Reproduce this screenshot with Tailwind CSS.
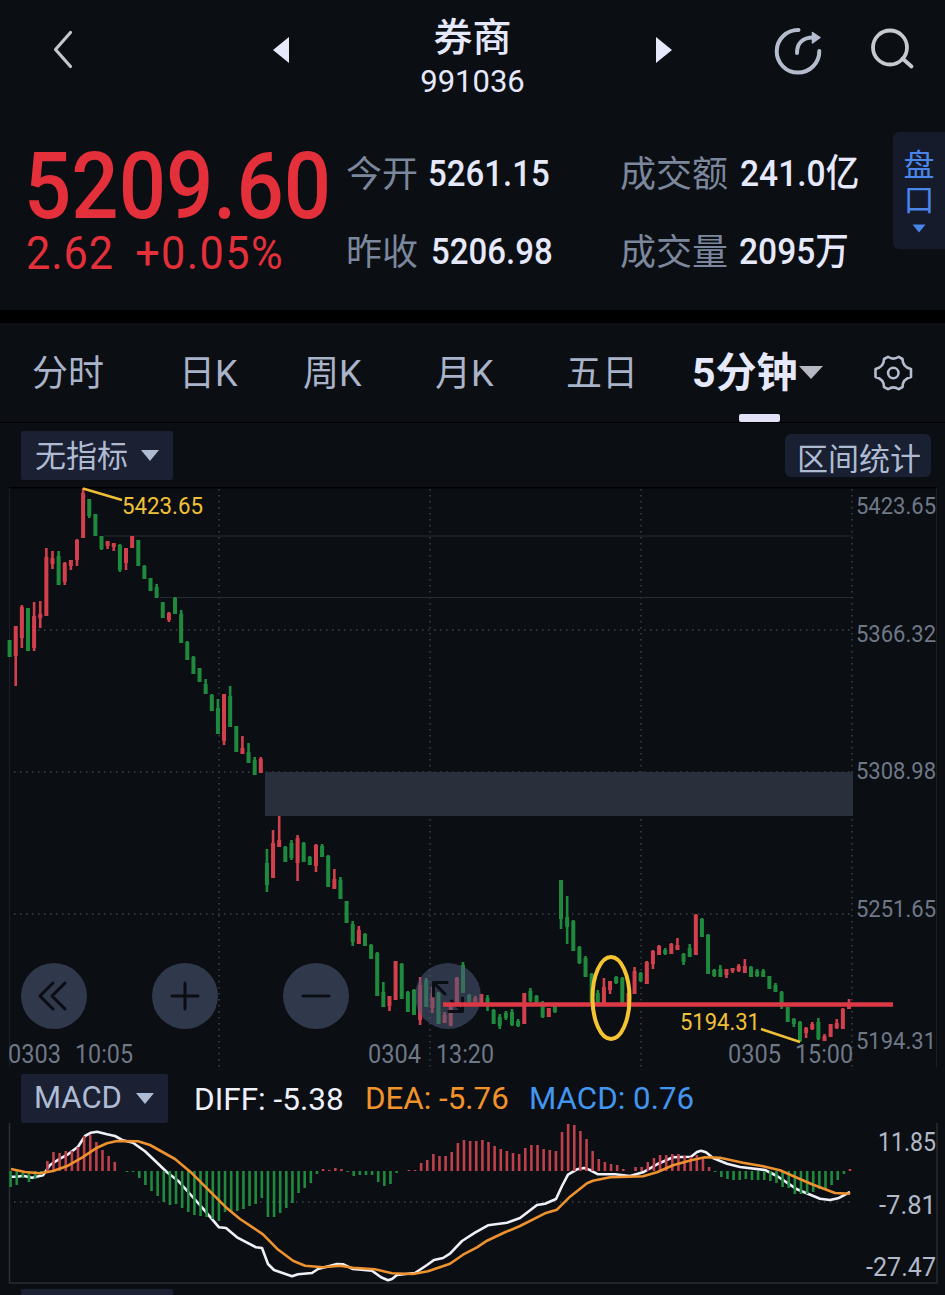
<!DOCTYPE html>
<html lang="zh-CN">
<head>
    <meta charset="UTF-8">
    <meta name="viewport" content="width=device-width, initial-scale=1.0">
    <title>券商 991036</title>
    <script src="https://cdn.jsdelivr.net/npm/@tailwindcss/browser@4"></script>
</head>
<body class="w-[945px] h-[1295px] overflow-hidden bg-[#0b0e13] text-[#e6e9fb] font-['Roboto','Noto_Sans_CJK_SC',sans-serif]">

    <!-- Title bar -->
    <header class="flex items-start h-[131px]">
        <svg class="mt-[28px] ml-[48px] w-8 h-11 shrink-0" viewBox="0 0 32 44" fill="none" stroke="#c3c6cd" stroke-width="3.2" stroke-linecap="round" stroke-linejoin="round"><path d="M22.5 4.5 7.500 21.500 22.500 38.500"/></svg>
        <svg class="mt-[36px] ml-[192px] w-[18px] h-7 shrink-0" viewBox="0 0 18 28" fill="#e6e9fb"><path d="M17 1v26L1 14z"/></svg>
        <div class="w-[365px] flex flex-col items-center">
            <h1 class="mt-[15px] text-[39px] leading-[46px] font-medium">券商</h1>
            <p class="mt-[2px] text-[31px] leading-[38px]">991036</p>
        </div>
        <svg class="mt-[36px] w-[18px] h-7 shrink-0" viewBox="0 0 18 28" fill="#e6e9fb"><path d="M1 1v26l16-13z"/></svg>
        <svg class="mt-[24px] ml-[98px] w-[54px] h-[54px] shrink-0" viewBox="771 24 54 54" fill="none" stroke="#b4bccd" stroke-width="4" stroke-linecap="round">
            <path d="M798.500 30A21.300 21.300 0 1 0 819.300 51"/>
            <path d="M797 53C797 43 803 37.500 813 37.500"/>
            <path d="M812.500 32.500 820 37.500 812.500 43z" fill="#b4bccd" stroke-width="1.500" stroke-linejoin="round"/>
        </svg>
        <svg class="mt-[24px] ml-[43px] w-[50px] h-[50px] shrink-0" viewBox="868 24 50 50" fill="none" stroke="#c6c9d0" stroke-width="3.800" stroke-linecap="round"><circle cx="890" cy="47.500" r="17"/><path d="M902.500 58.500 911.500 66.500"/></svg>
    </header>

    <!-- Quote summary -->
    <section class="flex h-[179px]">
        <div class="ml-[24px] w-[322px] text-[#e3303a] whitespace-nowrap">
            <div class="mt-[10px] h-[92px] text-[92px] leading-[92px] font-medium origin-left scale-x-[.905]">5209.60</div>
            <div class="h-[40px] text-[47px] leading-[40px] origin-left scale-x-[.92] flex gap-[23px] ml-[2px] tracking-[1px]"><span>2.62</span><span class="tracking-[1.500px]">+0.05%</span></div>
        </div>
        <dl class="w-[547px] grid grid-cols-[274px_273px] auto-rows-[78px] mt-[3px] whitespace-nowrap">
            <div class="flex items-center gap-[10px]"><dt class="pt-[4px] text-[36px] text-[#7b879c]">今开</dt><dd class="text-[37.500px] font-medium origin-left scale-x-[.88]">5261.15</dd></div>
            <div class="flex items-center gap-[12px]"><dt class="pt-[4px] text-[36px] text-[#7b879c]">成交额</dt><dd class="text-[37.500px] font-medium origin-left scale-x-[.895]">241.0亿</dd></div>
            <div class="flex items-center gap-[13px]"><dt class="pt-[4px] text-[36px] text-[#7b879c]">昨收</dt><dd class="text-[37.500px] font-medium origin-left scale-x-[.88]">5206.98</dd></div>
            <div class="flex items-center gap-[11px]"><dt class="pt-[4px] text-[36px] text-[#7b879c]">成交量</dt><dd class="text-[37.500px] font-medium origin-left scale-x-[.895]">2095万</dd></div>
        </dl>
        <button class="mt-[1px] w-[52px] h-[117px] rounded-l-md bg-[#151b2a] text-[#4a86ea] flex flex-col items-center pt-[16px] text-[31px] leading-[35px]">
            <span>盘</span><span>口</span>
            <svg class="mt-[6px] w-[14px] h-[9px]" viewBox="0 0 14 9" fill="#4a86ea"><path d="M.5.500h13L7 8.500z"/></svg>
        </button>
    </section>

    <div class="h-[13px] bg-black"></div>

    <!-- Period tabs -->
    <nav class="relative flex items-center h-[100px] border-b border-black text-[36px] text-[#a9b3c9] whitespace-nowrap pl-[32px]">
        <span class="w-[147px] pt-[3px]">分时</span>
        <span class="w-[124px] pt-[3px]">日K</span>
        <span class="w-[132px] pt-[3px]">周K</span>
        <span class="w-[131px] pt-[3px]">月K</span>
        <span class="w-[126px] pt-[3px]">五日</span>
        <span class="text-[41px] font-bold text-[#e6e9fb] w-[107px] pt-[3px]">5分钟</span>
        <svg class="w-6 h-[13px]" viewBox="0 0 24 13" fill="#b5b8c2"><path d="M0 0h24L12 13z"/></svg>
        <svg class="ml-[50px] w-[40px] h-[38px]" viewBox="873 353 40 38" fill="none" stroke="#b4bccd" stroke-width="2.600" stroke-linejoin="round">
            <path d="M898.700 355.800 902.500 358Q902.500 366 911 368V376Q902.500 378 902.500 386L898.700 388.200Q893.300 384.500 888 388.200L884 386Q884 378 875.500 376V368Q884 366 884 358L888 355.800Q893.300 359.500 898.700 355.800Z"/>
            <circle cx="893.300" cy="372" r="5.200"/>
        </svg>
        <i class="absolute left-[739px] bottom-0 w-[41px] h-2 rounded-xs bg-[#e2e1f7]"></i>
    </nav>

    <!-- Indicator row -->
    <div class="flex justify-between items-start h-16 pl-[21px] pr-[14px] text-[#aebbd3]">
        <button class="mt-[8px] w-[152px] h-[49px] rounded-xs bg-[#1b2033] flex items-center pl-[14px] gap-[13px] text-[31px]">
            <span class="pt-[4px]">无指标</span>
            <svg class="w-[18px] h-[11px]" viewBox="0 0 18 11" fill="#aebbd3"><path d="M0 0h18L9 11z"/></svg>
        </button>
        <button class="mt-[11px] w-[146px] h-[43px] rounded-md bg-[#182031] text-[31px] leading-[43px] pt-[4px] pl-[2px]">区间统计</button>
    </div>

    <!-- Candlestick chart -->
    <svg class="block w-[945px] h-[583px] font-['Roboto',sans-serif]" viewBox="0 487 945 583">
        <path d="M9 487.500H937" stroke="#000" stroke-width="2"/>
        <path d="M9.500 488V1067M936.500 488V1067" stroke="#1c2026"/>
        <g stroke="#30343b" stroke-width="2" stroke-dasharray="1.500 4.500">
            <path d="M14 630H852M14 772H852M14 914H852"/>
            <path d="M219 489V1067M430 489V1067M641 489V1067M852 489V1067"/>
        </g>
        <path d="M104 536H852M160 597.500H852" stroke="#292d33"/>
        <rect x="265" y="772" width="588" height="44" fill="#29303b"/>
        <g id="candles"></g>

        <g fill="#39445a" fill-opacity=".8">
            <circle cx="54" cy="996" r="33"/>
            <circle cx="185" cy="996" r="33"/>
            <circle cx="316" cy="996" r="33"/>
            <circle cx="448" cy="996" r="33" fill="#4d5a76" fill-opacity=".55"/>
        </g>
        <g fill="none" stroke="#0a0d14" stroke-width="3" stroke-linecap="round" stroke-linejoin="round">
            <path d="M53 983 40 996 53 1009M65 983 52 996 65 1009"/>
            <path d="M172 996H198M185 983V1009"/>
            <path d="M303 996H329"/>
            <path d="M447 982.500H433.500V996M434 983 445 994M449 1011.500H462.500V998M451.500 1001 462 1011"/>
        </g>

        <path d="M443 1004.500H893" stroke="#dd3846" stroke-width="4.500"/>
        <ellipse cx="611" cy="998" rx="18.500" ry="41" fill="none" stroke="#f5c431" stroke-width="4"/>
        <path d="M83 488.500 122 500M761 1029 800 1042" stroke="#eebf37" stroke-width="2.500"/>

        <g font-size="23.500" fill="#f0c038">
            <text x="122" y="514" textLength="81" lengthAdjust="spacingAndGlyphs">5423.65</text>
            <text x="680" y="1029.500" textLength="80" lengthAdjust="spacingAndGlyphs">5194.31</text>
        </g>
        <g font-size="24" fill="#6f7886">
            <text x="856" y="514" textLength="80" lengthAdjust="spacingAndGlyphs">5423.65</text>
            <text x="856" y="642" textLength="80" lengthAdjust="spacingAndGlyphs">5366.32</text>
            <text x="856" y="779" textLength="80" lengthAdjust="spacingAndGlyphs">5308.98</text>
            <text x="856" y="916.500" textLength="80" lengthAdjust="spacingAndGlyphs">5251.65</text>
            <text x="856" y="1049" textLength="80" lengthAdjust="spacingAndGlyphs">5194.31</text>
        </g>
        <g font-size="25" fill="#6f7886">
            <text x="8" y="1063" textLength="53" lengthAdjust="spacingAndGlyphs">0303</text>
            <text x="75" y="1063" textLength="58" lengthAdjust="spacingAndGlyphs">10:05</text>
            <text x="368" y="1063" textLength="53" lengthAdjust="spacingAndGlyphs">0304</text>
            <text x="436" y="1063" textLength="58" lengthAdjust="spacingAndGlyphs">13:20</text>
            <text x="728" y="1063" textLength="53" lengthAdjust="spacingAndGlyphs">0305</text>
            <text x="795" y="1063" textLength="58" lengthAdjust="spacingAndGlyphs">15:00</text>
        </g>
    </svg>

    <!-- MACD header -->
    <div class="flex items-center h-[53px] pl-[21px] text-[31.500px] whitespace-nowrap">
        <button class="mt-[4px] w-[147px] h-[49px] rounded-xs bg-[#1b2033] text-[#aebbd3] flex items-center pl-[13px] gap-[14px]">
            <span class="text-[31px]">MACD</span>
            <svg class="w-[18px] h-[11px]" viewBox="0 0 18 11" fill="#aebbd3"><path d="M0 0h18L9 11z"/></svg>
        </button>
        <span class="ml-[26px] mt-[6px] w-[171px] text-[#eef0fb]">DIFF: -5.38</span>
        <span class="mt-[6px] w-[164px] text-[31.300px] text-[#f0932b]">DEA: -5.76</span>
        <span class="mt-[6px] text-[31.300px] text-[#4296ef]">MACD: 0.76</span>
    </div>

    <!-- MACD chart -->
    <svg class="block w-[945px] h-[166px] font-['Roboto',sans-serif]" viewBox="0 1123 945 166">
        <path d="M9.500 1123V1283H937V1123" fill="none" stroke="#2a2e35" stroke-width="1.500"/>
        <path d="M14 1202H852" stroke="#30343b" stroke-width="2" stroke-dasharray="1.500 4.500"/>
        <path id="diff" fill="none" stroke="#f0f0fa" stroke-width="2.600" stroke-linejoin="round"/>
        <g id="bars"></g>
        <path id="dea" fill="none" stroke="#ee922f" stroke-width="2.600" stroke-linejoin="round"/>
        <g font-size="25" fill="#b2b9c8">
            <text x="878" y="1150.500" textLength="58" lengthAdjust="spacingAndGlyphs">11.85</text>
            <text x="879" y="1213.500" textLength="57" lengthAdjust="spacingAndGlyphs">-7.81</text>
            <text x="866" y="1276" textLength="70" lengthAdjust="spacingAndGlyphs">-27.47</text>
        </g>
    </svg>

    <div class="ml-[21px] w-[152px] h-[6px] bg-[#1b2033]"></div>

    <script>
        const NS = 'http://www.w3.org/2000/svg';
        const STEP = 6.127;
        const RED = '#d3404d';
        const GREEN = '#1f8a3d';

        // colour, high, body top, body bottom, low
        const candles = [
            ['g',640,640,657,657],['r',626,626,656,686],['r',605,607,638,648],['g',608,608,651,651],['r',602,616,648,651],
            ['r',601,614,618,628],['r',548,557,616,616],['r',551,558,564,569],['g',551,556,585,585],['r',562,563,582,585],
            ['r',560,560,566,570],['r',539,540,560,566],['r',488,493,538,538],['g',499,499,516,518],['g',514,514,536,536],
            ['g',536,536,549,550],['r',541,541,546,549],['r',543,543,547,551],['g',544,545,570,572],['r',548,548,563,570],
            ['r',536,536,548,548],['g',540,540,566,566],['g',565,566,579,579],['g',578,578,591,591],['g',584,587,598,598],
            ['g',602,602,618,618],['r',612,613,620,622],['g',597,598,614,614],['g',610,614,643,643],['g',641,642,660,660],
            ['g',656,657,674,674],['g',668,668,682,682],['g',679,684,694,694],['g',694,695,711,711],['g',699,708,734,734],
            ['r',694,694,741,745],['g',686,696,727,727],['g',726,726,752,752],['r',736,748,754,754],['g',743,752,763,763],
            ['g',757,760,775,775],['r',757,759,773,773],['g',849,863,885,892],['r',830,843,878,878],['r',816,840,847,847],
            ['g',846,847,862,862],['g',840,843,858,860],['r',835,838,863,881],['g',842,843,862,862],['g',856,857,865,865],
            ['r',844,845,866,872],['g',844,846,857,857],['g',855,856,887,887],['r',869,879,889,889],['g',877,880,899,899],
            ['g',901,901,923,923],['g',921,924,942,946],['r',926,930,944,944],['g',933,934,946,946],['g',944,945,959,959],
            ['g',952,953,996,996],['g',982,992,1007,1007],['r',996,996,1006,1011],['r',961,961,1000,1000],['g',963,964,999,999],
            ['g',991,992,1012,1012],['g',989,990,1015,1015],['r',977,985,1020,1025],['g',978,980,1007,1007],['r',987,995,1008,1013],
            ['g',992,993,1024,1024],['r',1012,1015,1023,1023],['r',1003,1005,1026,1026],['r',977,978,1003,1003],['g',962,965,993,993],
            ['g',994,995,1002,1002],['r',996,998,1002,1002],['r',994,994,1005,1005],['g',995,998,1006,1011],['g',1009,1010,1024,1024],
            ['g',1014,1017,1026,1029],['g',1011,1013,1018,1020],['g',1009,1012,1025,1026],['g',1019,1021,1026,1027],['r',993,993,1024,1024],
            ['g',988,991,1001,1002],['g',995,996,1003,1003],['g',1001,1006,1017,1018],['r',1008,1008,1017,1017],['g',1003,1006,1012,1013],
            ['g',880,880,919,929],['g',896,917,927,944],['g',920,921,951,951],['g',946,947,963,964],['g',956,958,977,977],
            ['g',973,974,1003,1003],['g',990,993,1003,1003],['r',978,987,1003,1003],['r',981,981,990,994],['g',976,977,983,984],
            ['g',977,978,1003,1003],['r',993,993,1003,1003],['r',967,971,994,994],['g',972,973,981,982],['r',961,962,984,984],
            ['r',950,951,964,969],['r',945,946,955,955],['g',948,950,954,955],['r',943,944,954,954],['r',938,945,950,950],
            ['g',953,954,962,965],['g',944,948,957,957],['r',914,915,955,955],['g',918,919,937,937],['g',934,935,974,974],
            ['g',969,970,976,977],['g',965,969,977,977],['r',969,969,975,978],['r',968,968,971,973],['r',964,966,971,972],
            ['r',959,966,973,973],['g',966,967,977,977],['g',969,971,976,977],['g',969,971,977,977],['g',976,976,989,989],
            ['g',983,985,992,992],['g',991,992,1005,1009],['g',1007,1007,1022,1022],['g',1018,1019,1024,1027],['g',1021,1022,1041,1042],
            ['r',1027,1028,1033,1038],['r',1022,1024,1029,1030],['g',1018,1022,1039,1040],['r',1034,1036,1041,1041],['r',1024,1024,1037,1037],
            ['r',1019,1023,1028,1029],['r',1008,1009,1029,1029],['r',999,1004,1009,1009]
        ];

        // histogram heights in px, positive is above the zero line
        const hist = [
            -16,-14,-7,-11,-8,-4,10,19,18,20,20,24,35,36,29,21,15,9,0,-1,-1,-7,-14,-20,-25,-31,-34,-33,-37,-41,-44,-45,-46,-48,-50,
            -41,-41,-40,-38,-35,-33,-27,-46,-46,-42,-37,-32,-22,-17,-12,-3,2,1,3,2,-1,-5,-4,-4,-4,-11,-15,-13,-2,0,1,1,8,11,17,15,15,
            19,28,31,30,30,31,29,25,22,20,18,17,23,26,26,22,21,20,39,47,46,40,32,20,12,9,7,6,2,0,4,4,9,13,16,16,17,17,15,14,16,14,4,
            -1,-6,-8,-9,-9,-8,-9,-9,-9,-10,-12,-16,-17,-23,-23,-23,-21,-18,-18,-14,-9,-3,2
        ];

        const diff = [
            [11,1176.7],[17,1176.7],[23,1175.7],[32,1177.7],[43,1175.3],[50,1165],[60,1158.7],[68,1154.3],[78,1146.7],[85,1136],[91,1132.7],
            [97,1131.7],[107,1134.3],[115,1136],[123,1140.3],[133,1142.7],[145,1151.3],[155,1160.7],[167,1172.3],[178,1180.7],[190,1194],
            [202,1207.3],[219,1227.3],[226,1228],[237,1237.3],[256,1247.3],[262,1248],[268,1264],[274,1270],[292,1276.3],[298,1274.3],
            [312,1273],[318,1269],[337,1264],[343,1264.3],[353,1269],[372,1270.7],[381,1277.3],[388,1280.3],[392,1279],[397,1275],[415,1273],
            [427,1265],[434,1260],[443,1258],[450,1253.7],[462,1241],[475,1232.7],[488,1225.3],[507,1222.7],[520,1218],[537,1205],[545,1203.7],
            [556,1199],[562,1186],[568,1174.7],[577,1169.3],[584,1168],[590,1170],[598,1174.3],[615,1174.3],[630,1176],[643,1172.3],
            [657,1164.3],[673,1157.3],[691,1156.7],[697,1152],[701,1150.7],[706,1152.3],[713,1158],[727,1163.7],[740,1167],[765,1170],
            [777,1176],[787,1182.7],[797,1189.3],[820,1198.7],[830,1200],[838,1198.3],[850,1192]
        ];
        const dea = [
            [11,1169],[25,1172],[40,1173.3],[53,1171],[68,1165.7],[82,1157.7],[97,1147.7],[107,1143.3],[117,1141],[138,1141.3],[150,1145],
            [175,1159],[192,1173.3],[207,1188.3],[227,1208.3],[240,1219],[263,1234.3],[277,1248.7],[293,1260.7],[305,1265.7],[323,1267.3],
            [340,1265.7],[353,1267.7],[375,1269.3],[392,1273.3],[413,1274],[428,1271.3],[450,1263.7],[463,1254.7],[477,1247.3],[487,1240.7],
            [505,1232.3],[520,1226],[545,1213.3],[557,1209.7],[570,1196.7],[587,1183.3],[593,1180.7],[610,1177.3],[628,1176.7],[643,1176.3],
            [657,1172.3],[673,1165.3],[692,1160],[705,1157.3],[720,1157.7],[743,1162.7],[763,1166.3],[780,1170.3],[797,1177.7],[812,1184.3],
            [835,1193],[850,1193.7]
        ];

        function addRect(parent, cx, top, width, height, fill) {
            const rect = document.createElementNS(NS, 'rect');
            rect.setAttribute('x', cx - width / 2);
            rect.setAttribute('y', top);
            rect.setAttribute('width', width);
            rect.setAttribute('height', Math.max(height, 1));
            rect.setAttribute('fill', fill);
            parent.appendChild(rect);
        }

        const candleGroup = document.getElementById('candles');
        candles.forEach(([side, high, top, bottom, low], i) => {
            const x = 9.6 + i * STEP;
            const fill = side === 'r' ? RED : GREEN;
            addRect(candleGroup, x, high, 2.6, low - high, fill);
            addRect(candleGroup, x, top, 4, bottom - top, fill);
        });

        const barGroup = document.getElementById('bars');
        hist.forEach((h, i) => {
            if (h === 0) return;
            addRect(barGroup, 10.6 + i * STEP, h > 0 ? 1171 - h : 1171, 2.6, Math.abs(h), h > 0 ? '#bd404b' : GREEN);
        });

        document.getElementById('diff').setAttribute('d', 'M' + diff.join('L'));
        document.getElementById('dea').setAttribute('d', 'M' + dea.join('L'));
    </script>
</body>
</html>
